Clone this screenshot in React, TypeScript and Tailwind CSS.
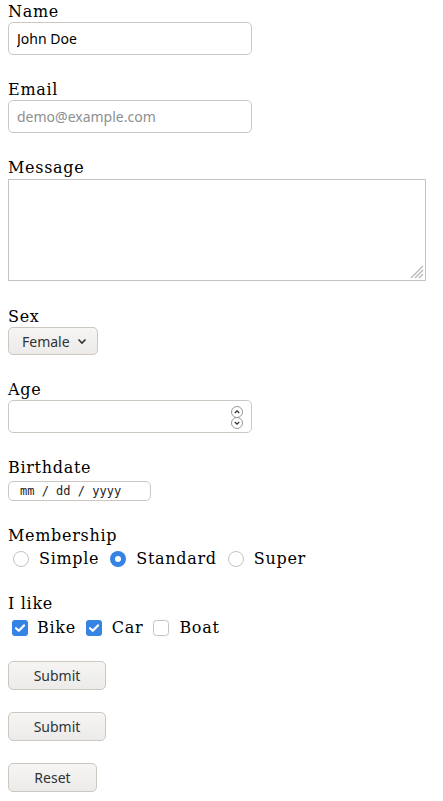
import { useState } from 'react';

const serif = "font-['DejaVu_Serif',serif] tracking-[0.7px]";
const sans = "font-['Noto_Sans',sans-serif]";

function Label({ children, className = '' }: { children: React.ReactNode; className?: string }) {
  return <label className={`block text-[16px] leading-[19px] text-black ${serif} ${className}`}>{children}</label>;
}

function Radio({ checked, onClick }: { checked: boolean; onClick: () => void }) {
  return (
    <span onClick={onClick} className="w-[16px] h-[16px] shrink-0 cursor-pointer">
      <svg width="16" height="16" viewBox="0 0 16 16">
        {checked ? (
          <>
            <circle cx="8" cy="8" r="8" fill="#3584e4" />
            <circle cx="8" cy="8" r="3" fill="#fff" />
          </>
        ) : (
          <circle cx="8" cy="8" r="7.5" fill="#fff" stroke="#c6c2bd" />
        )}
      </svg>
    </span>
  );
}

function Checkbox({ checked, onClick }: { checked: boolean; onClick: () => void }) {
  return (
    <span onClick={onClick} className="w-[16px] h-[16px] shrink-0 cursor-pointer">
      <svg width="16" height="16" viewBox="0 0 16 16">
        {checked ? (
          <>
            <rect x="0" y="0" width="16" height="16" rx="3" fill="#3584e4" />
            <path d="M4 8.2 L6.8 10.8 L12 5.4" fill="none" stroke="#fff" strokeWidth="2.2" strokeLinecap="round" strokeLinejoin="round" />
          </>
        ) : (
          <rect x="0.5" y="0.5" width="15" height="15" rx="3" fill="#fff" stroke="#c6c2bd" />
        )}
      </svg>
    </span>
  );
}

function Button({ children, className = '' }: { children: React.ReactNode; className?: string }) {
  return (
    <button
      type="button"
      className={`block h-[29px] rounded-[5px] border border-[#cdc7c2] bg-gradient-to-b from-[#f6f5f4] to-[#edebe9] text-[14px] text-[#2e3436] ${sans} ${className}`}
    >
      {children}
    </button>
  );
}

export default function App() {
  const [membership, setMembership] = useState('standard');
  const [likes, setLikes] = useState<Record<string, boolean>>({ bike: true, car: true, boat: false });

  const toggle = (k: string) => setLikes({ ...likes, [k]: !likes[k] });

  return (
    <div className="min-h-screen bg-white px-2 pt-[2px]">
      <Label>Name</Label>
      <input
        defaultValue="John Doe"
        className={`mt-[1px] block h-[33px] w-[244px] rounded-[5px] border border-[#cdc7c2] bg-white pl-[8px] text-[14px] text-black outline-none ${sans}`}
      />

      <Label className="mt-[25px]">Email</Label>
      <input
        placeholder="demo@example.com"
        className={`mt-[1px] block h-[33px] w-[244px] rounded-[5px] border border-[#cdc7c2] bg-white pl-[8px] text-[14px] text-black outline-none placeholder:text-[#8d9091] ${sans}`}
      />

      <Label className="mt-[25px]">Message</Label>
      <div className="relative mt-[2px] w-[418px] h-[102px]">
        <textarea className="block h-full w-full resize-none border border-[#c4c4c4] bg-white outline-none" />
        <svg className="pointer-events-none absolute right-[2px] bottom-[2px]" width="14" height="14" viewBox="0 0 14 14">
          <path d="M1 13 L13 1 M5 13 L13 5 M9 13 L13 9" stroke="#b4b4b4" strokeWidth="1.2" />
        </svg>
      </div>

      <Label className="mt-[26px]">Sex</Label>
      <div className="relative mt-[1px] w-[90px] h-[28px]">
        <select
          defaultValue="female"
          className={`block h-full w-full appearance-none rounded-[5px] border border-[#cdc7c2] bg-gradient-to-b from-[#f6f5f4] to-[#edebe9] pl-[13px] text-[14px] text-[#2e3436] outline-none ${sans}`}
        >
          <option value="male">Male</option>
          <option value="female">Female</option>
        </select>
        <svg className="pointer-events-none absolute left-[69px] top-[11px]" width="10" height="7" viewBox="0 0 10 7">
          <path d="M1.5 1.5 L5 5 L8.5 1.5" fill="none" stroke="#2e3436" strokeWidth="1.6" />
        </svg>
      </div>

      <Label className="mt-[25px]">Age</Label>
      <div className="relative mt-[1px] w-[244px] h-[33px]">
        <input
          type="text"
          inputMode="numeric"
          className={`block h-full w-full rounded-[5px] border border-[#cdc7c2] bg-white pl-[8px] text-[14px] outline-none ${sans}`}
        />
        <svg className="pointer-events-none absolute left-[222px] top-[6px]" width="14" height="23" viewBox="0 0 14 23">
          <circle cx="7" cy="6" r="5.5" fill="#fff" stroke="#9a9996" />
          <circle cx="7" cy="17" r="5.5" fill="#fff" stroke="#9a9996" />
          <path d="M4.8 7 L7 4.8 L9.2 7" fill="none" stroke="#2e3436" strokeWidth="1.3" />
          <path d="M4.8 16 L7 18.2 L9.2 16" fill="none" stroke="#2e3436" strokeWidth="1.3" />
        </svg>
      </div>

      <Label className="mt-[25px]">Birthdate</Label>
      <div className="mt-[4px] flex h-[20px] w-[143px] items-center rounded-[5px] border border-[#cdc7c2] bg-white pl-[11px] text-[12px] text-[#1e2224] font-['DejaVu_Sans_Mono',monospace]">
        mm / dd / yyyy
      </div>

      <Label className="mt-[25px]">Membership</Label>
      <div className={`mt-[4px] flex h-[19px] items-center text-[16px] leading-[19px] ${serif}`}>
        <span className="ml-[5px]" />
        <Radio checked={membership === 'simple'} onClick={() => setMembership('simple')} />
        <span className="ml-[10px]">Simple</span>
        <span className="ml-[11px]" />
        <Radio checked={membership === 'standard'} onClick={() => setMembership('standard')} />
        <span className="ml-[10px]">Standard</span>
        <span className="ml-[11px]" />
        <Radio checked={membership === 'super'} onClick={() => setMembership('super')} />
        <span className="ml-[10px]">Super</span>
      </div>

      <Label className="mt-[26px]">I like</Label>
      <div className={`mt-[5px] flex h-[19px] items-center text-[16px] leading-[19px] ${serif}`}>
        <span className="ml-[4px]" />
        <Checkbox checked={likes.bike} onClick={() => toggle('bike')} />
        <span className="ml-[9px]">Bike</span>
        <span className="ml-[10px]" />
        <Checkbox checked={likes.car} onClick={() => toggle('car')} />
        <span className="ml-[10px]">Car</span>
        <span className="ml-[10px]" />
        <Checkbox checked={likes.boat} onClick={() => toggle('boat')} />
        <span className="ml-[10px]">Boat</span>
      </div>

      <Button className="mt-[24px] w-[98px]">Submit</Button>
      <Button className="mt-[22px] w-[98px]">Submit</Button>
      <Button className="mt-[22px] w-[89px]">Reset</Button>
    </div>
  );
}
